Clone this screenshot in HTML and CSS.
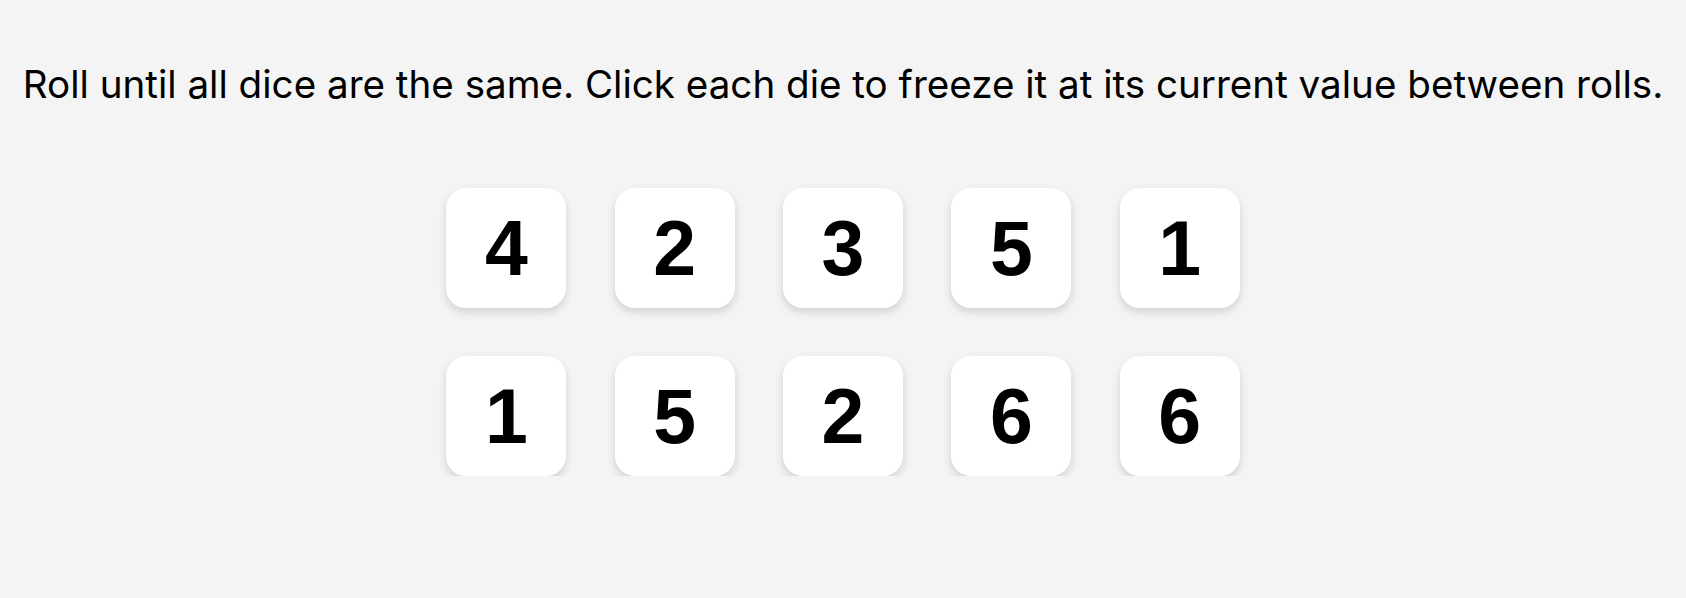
FILE: index.html
```html
<!DOCTYPE html>
<html lang="en">
<head>
<meta charset="utf-8">
<title>Dice</title>
<link rel="stylesheet" href="styles.css">
</head>
<body>
<main class="page">
  <p class="intro">Roll until all dice are the same. Click each die to freeze it at its current value between rolls.</p>
  <div class="dice">
    <button class="die">4</button>
    <button class="die">2</button>
    <button class="die">3</button>
    <button class="die">5</button>
    <button class="die">1</button>
    <button class="die">1</button>
    <button class="die">5</button>
    <button class="die">2</button>
    <button class="die">6</button>
    <button class="die">6</button>
  </div>
</main>
</body>
</html>
```
FILE: styles.css
```css
html, body {
  margin: 0;
  padding: 0;
  background: #f4f4f4;
}
.page {
  display: flex;
  flex-direction: column;
  align-items: center;
  font-family: Inter, "Noto Sans", sans-serif;
  color: #000;
}
.intro {
  margin: 60px 0 0;
  font-size: 38.6px;
  line-height: 48px;
  text-align: center;
  white-space: nowrap;
}
.dice {
  margin-top: 80px;
  display: grid;
  grid-template-columns: repeat(5, 120px);
  column-gap: 48.3px;
  row-gap: 48px;
}
.die {
  width: 120px;
  height: 120px;
  border: none;
  border-radius: 20px;
  background: #fff;
  box-shadow: 0 4px 8px rgba(0, 0, 0, 0.15);
  font-family: "Liberation Sans", Arial, sans-serif;
  font-weight: bold;
  font-size: 77px;
  color: #000;
  padding: 0;
  cursor: pointer;
}
```
